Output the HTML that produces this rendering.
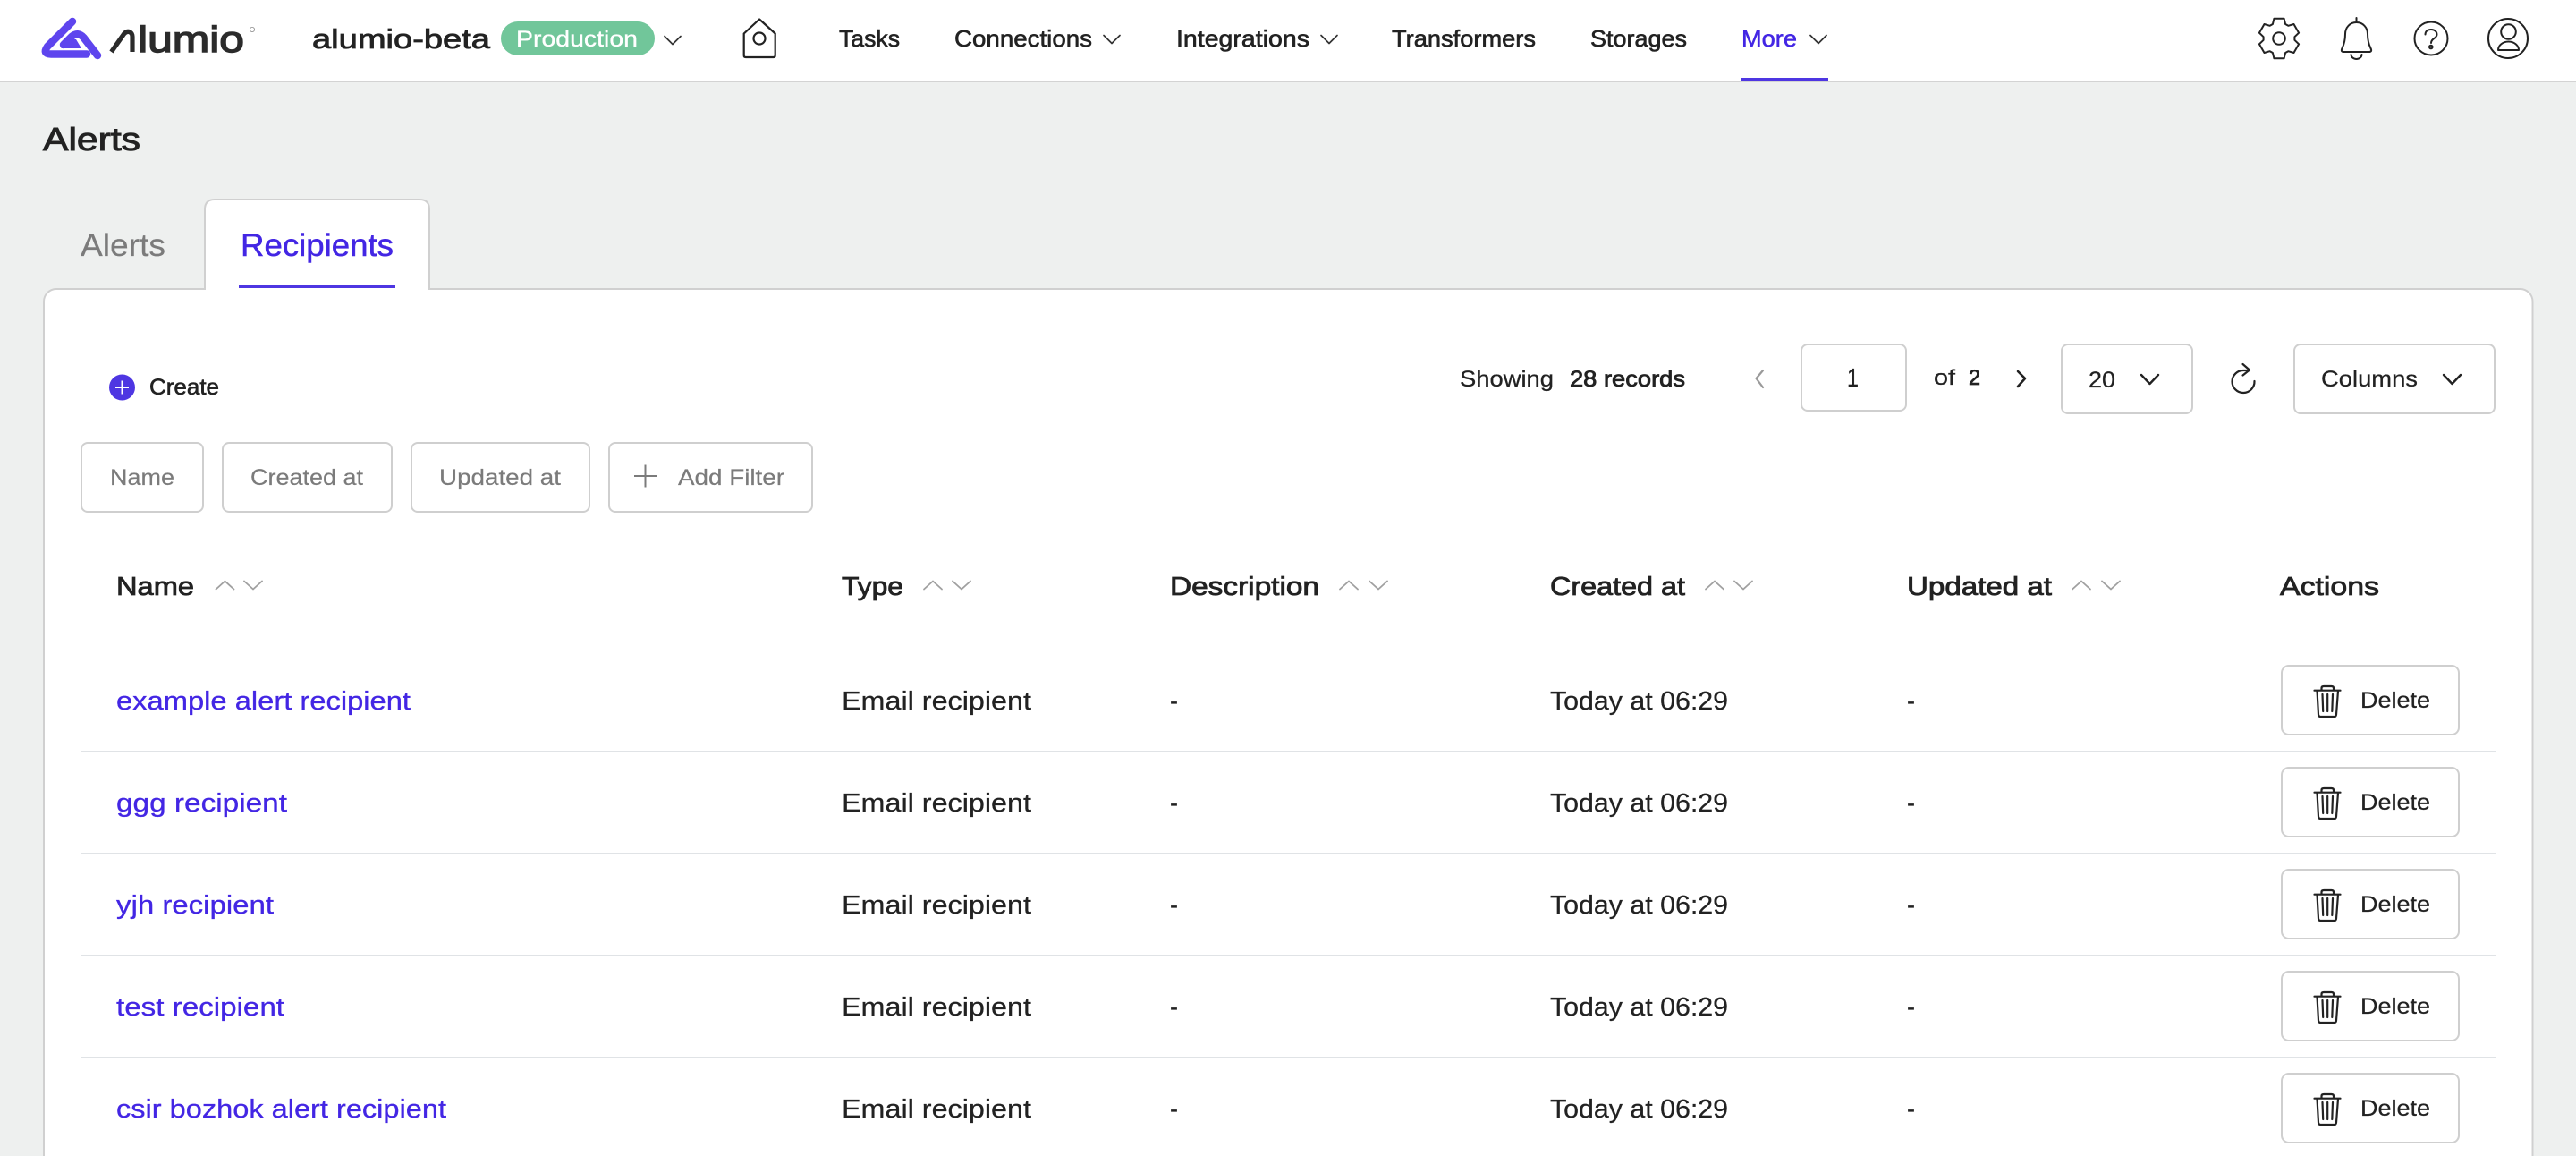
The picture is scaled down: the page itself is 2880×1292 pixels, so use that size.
<!DOCTYPE html>
<html lang="en"><head><meta charset="utf-8"><title>Alerts - Recipients</title>
<style>
html,body{margin:0;padding:0;background:#eef0ef;width:2880px;height:1292px;overflow:hidden}
svg{display:block}
text{font-family:"Liberation Sans","DejaVu Sans",sans-serif;fill:#222;stroke:#222;stroke-width:.25}
.m{stroke:#222;stroke-width:.6}
.h{stroke:#222;stroke-width:.95}
.b{stroke:#222;stroke-width:.8}
.g{fill:#7b7b7b;stroke:#7b7b7b;stroke-width:.2}
.l{fill:#4326e4;stroke:#4326e4;stroke-width:.3}
.box{fill:#fff;stroke:#cfcfcf;stroke-width:2}
.i{fill:none;stroke:#222;stroke-width:2.2;stroke-linecap:round;stroke-linejoin:round}
.c{fill:none;stroke:#333;stroke-width:1.7;stroke-linecap:round;stroke-linejoin:round}
.s{fill:none;stroke:#a0a0a0;stroke-width:1.8;stroke-linecap:round;stroke-linejoin:round}
</style></head><body>
<svg width="2880" height="1292" viewBox="0 0 2880 1292" xmlns="http://www.w3.org/2000/svg">
<defs>
<filter id="bl" x="-5%" y="-200%" width="110%" height="500%"><feGaussianBlur stdDeviation="16"/></filter>
<clipPath id="cardclip"><rect x="50" y="324" width="2781" height="968"/></clipPath>
<g id="trash" class="i"><path d="M2587.500 -10.300H2616.500M2595.500 -10.500V-13Q2595.500 -15 2598 -15H2606.500Q2609 -15 2609 -13V-10.500M2590.500 -10L2592 16.500Q2592.200 19 2594.500 19H2609.500Q2611.800 19 2612 16.500L2614 -10M2596.500 -6L2597.200 13M2602.200 -6V13M2608 -6L2607.300 13"/></g>
<path id="chev" d="M-9 -4.500L0 4.500L9 -4.500" fill="none"/>
</defs>

<!-- header -->
<rect x="0" y="0" width="2880" height="90" fill="#fff"/>
<rect x="0" y="90" width="2880" height="2" fill="#d3d3d3"/>

<!-- logo -->
<g fill="none" stroke="#5e45ee" stroke-width="8.400" stroke-linecap="round" stroke-linejoin="round">
<path d="M81 24L53 52Q47 60.500 57 60.500H97"/>
<path d="M109 62L93.500 42Q87 35 80 41L71 50"/>
</g>
<path d="M68 54L80 44H85L91 54Z" fill="#5e45ee"/>
<path d="M124.500 58L138.500 38Q142 34 145.500 36Q148 37.500 148 41V58" fill="none" stroke="#2b2b2b" stroke-width="5.200" stroke-linejoin="round"/>
<text x="154" y="58" font-size="41" textLength="119" lengthAdjust="spacingAndGlyphs" style="fill:#2b2b2b;stroke:#2b2b2b;stroke-width:1.400">lumio</text>
<circle cx="282" cy="33" r="2.600" fill="none" stroke="#888" stroke-width=".8"/>

<text class="b" x="349" y="54" font-size="31" textLength="199" lengthAdjust="spacingAndGlyphs">alumio-beta</text>
<rect x="560" y="24" width="172" height="38" rx="19" fill="#71c69a"/>
<text x="577" y="52" font-size="25" textLength="136" lengthAdjust="spacingAndGlyphs" style="fill:#fff;stroke:#fff;stroke-width:.3">Production</text>
<use href="#chev" x="752" y="45" class="c"/>

<g class="i"><path d="M849 21.500L831.700 37.500V62Q831.700 64 833.700 64H864.700Q866.700 64 866.700 62V37.500Z"/><circle cx="849" cy="43" r="6.500"/></g>

<text class="m" x="938" y="52" font-size="26" textLength="68" lengthAdjust="spacingAndGlyphs">Tasks</text>
<text class="m" x="1067" y="52" font-size="26" textLength="154" lengthAdjust="spacingAndGlyphs">Connections</text>
<use href="#chev" x="1243" y="44" class="c"/>
<text class="m" x="1315" y="52" font-size="26" textLength="149" lengthAdjust="spacingAndGlyphs">Integrations</text>
<use href="#chev" x="1486" y="44" class="c"/>
<text class="m" x="1556" y="52" font-size="26" textLength="161" lengthAdjust="spacingAndGlyphs">Transformers</text>
<text class="m" x="1778" y="52" font-size="26" textLength="108" lengthAdjust="spacingAndGlyphs">Storages</text>
<text x="1947" y="52" font-size="26" textLength="62" lengthAdjust="spacingAndGlyphs" style="fill:#4326e4;stroke:#4326e4;stroke-width:.5">More</text>
<use href="#chev" x="2033" y="44" class="c"/>
<rect x="1947" y="87" width="97" height="3.500" fill="#4e36e2"/>

<!-- right icons -->
<g class="i" style="stroke-width:2">
<path transform="translate(2548 43)" d="M-5.600 -22.300L5.600 -22.300L7.100 -16L10.300 -14.200L16.500 -16L22.100 -6.300L17.400 -1.800L17.400 1.800L22.100 6.300L16.500 16L10.300 14.200L7.100 16L5.600 22.300L-5.600 22.300L-7.100 16L-10.300 14.200L-16.500 16L-22.100 6.300L-17.400 1.800L-17.400 -1.800L-22.100 -6.300L-16.500 -16L-10.300 -14.200L-7.100 -16Z"/>
<circle cx="2548" cy="43" r="6.800"/>
<path d="M2634.500 20V25M2634.500 25C2627 25 2622 31 2622 38C2622 46 2620.500 50 2618.500 54Q2616.500 58 2620.500 58H2648.500Q2652.500 58 2650.500 54C2648.500 50 2647 46 2647 38C2647 31 2642 25 2634.500 25ZM2628.500 61A6 5 0 0 0 2640.500 61"/>
<circle cx="2718" cy="43" r="18.500"/>
<path d="M2711.500 38.500C2711.500 34.500 2714.500 33 2718 33C2722 33 2724.500 35.500 2724.500 38.500C2724.500 43 2718 43 2718 48"/>
<circle cx="2717.800" cy="52.500" r="1.800"/>
<circle cx="2804" cy="43" r="22"/>
<circle cx="2804.500" cy="35.500" r="8.300"/>
<path d="M2793 56A11.500 9.500 0 0 1 2816 56Z"/>
</g>

<!-- title -->
<text class="h" x="48" y="168" font-size="36" textLength="109" lengthAdjust="spacingAndGlyphs">Alerts</text>

<!-- card and tabs -->
<rect x="49" y="323" width="2782.500" height="1010" rx="14" fill="#fff" stroke="#d0d0d0" stroke-width="2"/>
<path d="M229 323V234Q229 223 240 223H469Q480 223 480 234V323" fill="#fff" stroke="#d0d0d0" stroke-width="2"/>
<rect x="230" y="321" width="249" height="4" fill="#fff"/>
<text class="g" x="90" y="286" font-size="35" textLength="95" lengthAdjust="spacingAndGlyphs">Alerts</text>
<text x="269" y="286" font-size="35" textLength="171" lengthAdjust="spacingAndGlyphs" style="fill:#4326e4;stroke:#4326e4;stroke-width:.5">Recipients</text>
<rect x="267" y="318" width="175" height="4" fill="#4e36e2"/>

<!-- create -->
<circle cx="136.500" cy="433" r="14.500" fill="#4e36e2"/>
<path d="M136.500 425.500V440.500M129 433H144" stroke="#fff" stroke-width="2" fill="none"/>
<text class="m" x="167" y="441" font-size="25" textLength="78" lengthAdjust="spacingAndGlyphs">Create</text>

<!-- filters -->
<rect class="box" x="91" y="495" width="136" height="77" rx="7"/>
<rect class="box" x="249" y="495" width="189" height="77" rx="7"/>
<rect class="box" x="460" y="495" width="199" height="77" rx="7"/>
<rect class="box" x="681" y="495" width="227" height="77" rx="7"/>
<text class="g" x="123" y="542" font-size="25" textLength="72" lengthAdjust="spacingAndGlyphs">Name</text>
<text class="g" x="280" y="542" font-size="25" textLength="126" lengthAdjust="spacingAndGlyphs">Created at</text>
<text class="g" x="491" y="542" font-size="25" textLength="136" lengthAdjust="spacingAndGlyphs">Updated at</text>
<path d="M721.500 519.500V544.500M709 532H734" stroke="#7b7b7b" stroke-width="2" fill="none"/>
<text class="g" x="758" y="542" font-size="25" textLength="119" lengthAdjust="spacingAndGlyphs">Add Filter</text>

<!-- pagination -->
<text x="1632" y="432" font-size="25" textLength="105" lengthAdjust="spacingAndGlyphs">Showing</text>
<text class="b" x="1755" y="432" font-size="25" textLength="129" lengthAdjust="spacingAndGlyphs">28 records</text>
<path d="M1971 414L1963.500 423L1971 433" fill="none" stroke="#9a9a9a" stroke-width="2.200" stroke-linecap="round" stroke-linejoin="round"/>
<rect class="box" x="2014" y="385" width="117" height="74" rx="7"/>
<text x="2065" y="432" font-size="29" textLength="13" lengthAdjust="spacingAndGlyphs">1</text>
<text x="2162" y="430" font-size="24" textLength="24" lengthAdjust="spacingAndGlyphs">of</text>
<text class="b" x="2201" y="430" font-size="24" textLength="13" lengthAdjust="spacingAndGlyphs">2</text>
<path d="M2256 415L2264 423L2256 432" fill="none" stroke="#222" stroke-width="2.600" stroke-linecap="round" stroke-linejoin="round"/>
<rect class="box" x="2305" y="385" width="146" height="77" rx="7"/>
<text x="2335" y="433" font-size="25" textLength="30" lengthAdjust="spacingAndGlyphs">20</text>
<path d="M2394 419L2403.500 429L2413 419" fill="none" stroke="#222" stroke-width="2.400" stroke-linecap="round" stroke-linejoin="round"/>
<g class="i" transform="translate(0 -1)"><path d="M2515 415H2508.500A12.500 12.500 0 1 0 2520.500 427"/><path d="M2507.500 408L2515 414.500L2507.500 420.500"/></g>
<rect class="box" x="2565" y="385" width="224" height="77" rx="7"/>
<text x="2595" y="432" font-size="25" textLength="108" lengthAdjust="spacingAndGlyphs">Columns</text>
<path d="M2732 419L2741.500 429L2751 419" fill="none" stroke="#222" stroke-width="2.400" stroke-linecap="round" stroke-linejoin="round"/>

<!-- table head -->
<g font-size="29">
<text class="b" x="130" y="665" textLength="87" lengthAdjust="spacingAndGlyphs">Name</text>
<text class="b" x="941" y="665" textLength="69" lengthAdjust="spacingAndGlyphs">Type</text>
<text class="b" x="1308" y="665" textLength="167" lengthAdjust="spacingAndGlyphs">Description</text>
<text class="b" x="1733" y="665" textLength="151" lengthAdjust="spacingAndGlyphs">Created at</text>
<text class="b" x="2132" y="665" textLength="162" lengthAdjust="spacingAndGlyphs">Updated at</text>
<text class="b" x="2549" y="665" textLength="111" lengthAdjust="spacingAndGlyphs">Actions</text>
</g>
<g class="s">
<path d="M241.500 658.500L251.500 649.500L261.500 658.500M273 649.500L283 658.500L293 649.500"/>
<path d="M1033 658.500L1043 649.500L1053 658.500M1065 649.500L1075 658.500L1085 649.500"/>
<path d="M1498 658.500L1508 649.500L1518 658.500M1531 649.500L1541 658.500L1551 649.500"/>
<path d="M1907 658.500L1917 649.500L1927 658.500M1939 649.500L1949 658.500L1959 649.500"/>
<path d="M2317 658.500L2327 649.500L2337 658.500M2350 649.500L2360 658.500L2370 649.500"/>
</g>

<!-- dividers -->
<g fill="#e0e3e6">
<rect x="90" y="839" width="2700" height="2"/>
<rect x="90" y="953" width="2700" height="2"/>
<rect x="90" y="1067" width="2700" height="2"/>
<rect x="90" y="1181" width="2700" height="2"/>
</g>

<!-- fade -->
<g clip-path="url(#cardclip)"><rect x="110" y="1292" width="2660" height="30" fill="#efefef" filter="url(#bl)"/></g>

<!-- rows -->
<g font-size="29">
<text class="l" x="130" y="793" textLength="329" lengthAdjust="spacingAndGlyphs">example alert recipient</text>
<text x="941" y="793" textLength="212" lengthAdjust="spacingAndGlyphs">Email recipient</text>
<text x="1308" y="793" textLength="9" lengthAdjust="spacingAndGlyphs">-</text>
<text x="1733" y="793" textLength="199" lengthAdjust="spacingAndGlyphs">Today at 06:29</text>
<text x="2132" y="793" textLength="9" lengthAdjust="spacingAndGlyphs">-</text>

<text class="l" x="130" y="907" textLength="191" lengthAdjust="spacingAndGlyphs">ggg recipient</text>
<text x="941" y="907" textLength="212" lengthAdjust="spacingAndGlyphs">Email recipient</text>
<text x="1308" y="907" textLength="9" lengthAdjust="spacingAndGlyphs">-</text>
<text x="1733" y="907" textLength="199" lengthAdjust="spacingAndGlyphs">Today at 06:29</text>
<text x="2132" y="907" textLength="9" lengthAdjust="spacingAndGlyphs">-</text>

<text class="l" x="130" y="1021" textLength="176" lengthAdjust="spacingAndGlyphs">yjh recipient</text>
<text x="941" y="1021" textLength="212" lengthAdjust="spacingAndGlyphs">Email recipient</text>
<text x="1308" y="1021" textLength="9" lengthAdjust="spacingAndGlyphs">-</text>
<text x="1733" y="1021" textLength="199" lengthAdjust="spacingAndGlyphs">Today at 06:29</text>
<text x="2132" y="1021" textLength="9" lengthAdjust="spacingAndGlyphs">-</text>

<text class="l" x="130" y="1135" textLength="188" lengthAdjust="spacingAndGlyphs">test recipient</text>
<text x="941" y="1135" textLength="212" lengthAdjust="spacingAndGlyphs">Email recipient</text>
<text x="1308" y="1135" textLength="9" lengthAdjust="spacingAndGlyphs">-</text>
<text x="1733" y="1135" textLength="199" lengthAdjust="spacingAndGlyphs">Today at 06:29</text>
<text x="2132" y="1135" textLength="9" lengthAdjust="spacingAndGlyphs">-</text>

<text class="l" x="130" y="1249" textLength="369" lengthAdjust="spacingAndGlyphs">csir bozhok alert recipient</text>
<text x="941" y="1249" textLength="212" lengthAdjust="spacingAndGlyphs">Email recipient</text>
<text x="1308" y="1249" textLength="9" lengthAdjust="spacingAndGlyphs">-</text>
<text x="1733" y="1249" textLength="199" lengthAdjust="spacingAndGlyphs">Today at 06:29</text>
<text x="2132" y="1249" textLength="9" lengthAdjust="spacingAndGlyphs">-</text>
</g>

<!-- delete buttons -->
<g>
<rect class="box" x="2551" y="744" width="198" height="77" rx="8"/>
<rect class="box" x="2551" y="858" width="198" height="77" rx="8"/>
<rect class="box" x="2551" y="972" width="198" height="77" rx="8"/>
<rect class="box" x="2551" y="1086" width="198" height="77" rx="8"/>
<rect class="box" x="2551" y="1200" width="198" height="77" rx="8"/>
<use href="#trash" y="782"/><use href="#trash" y="896"/><use href="#trash" y="1010"/><use href="#trash" y="1124"/><use href="#trash" y="1238"/>
</g>
<g font-size="25">
<text x="2639" y="791" textLength="78" lengthAdjust="spacingAndGlyphs">Delete</text>
<text x="2639" y="905" textLength="78" lengthAdjust="spacingAndGlyphs">Delete</text>
<text x="2639" y="1019" textLength="78" lengthAdjust="spacingAndGlyphs">Delete</text>
<text x="2639" y="1133" textLength="78" lengthAdjust="spacingAndGlyphs">Delete</text>
<text x="2639" y="1247" textLength="78" lengthAdjust="spacingAndGlyphs">Delete</text>
</g>
</svg>
</body></html>
